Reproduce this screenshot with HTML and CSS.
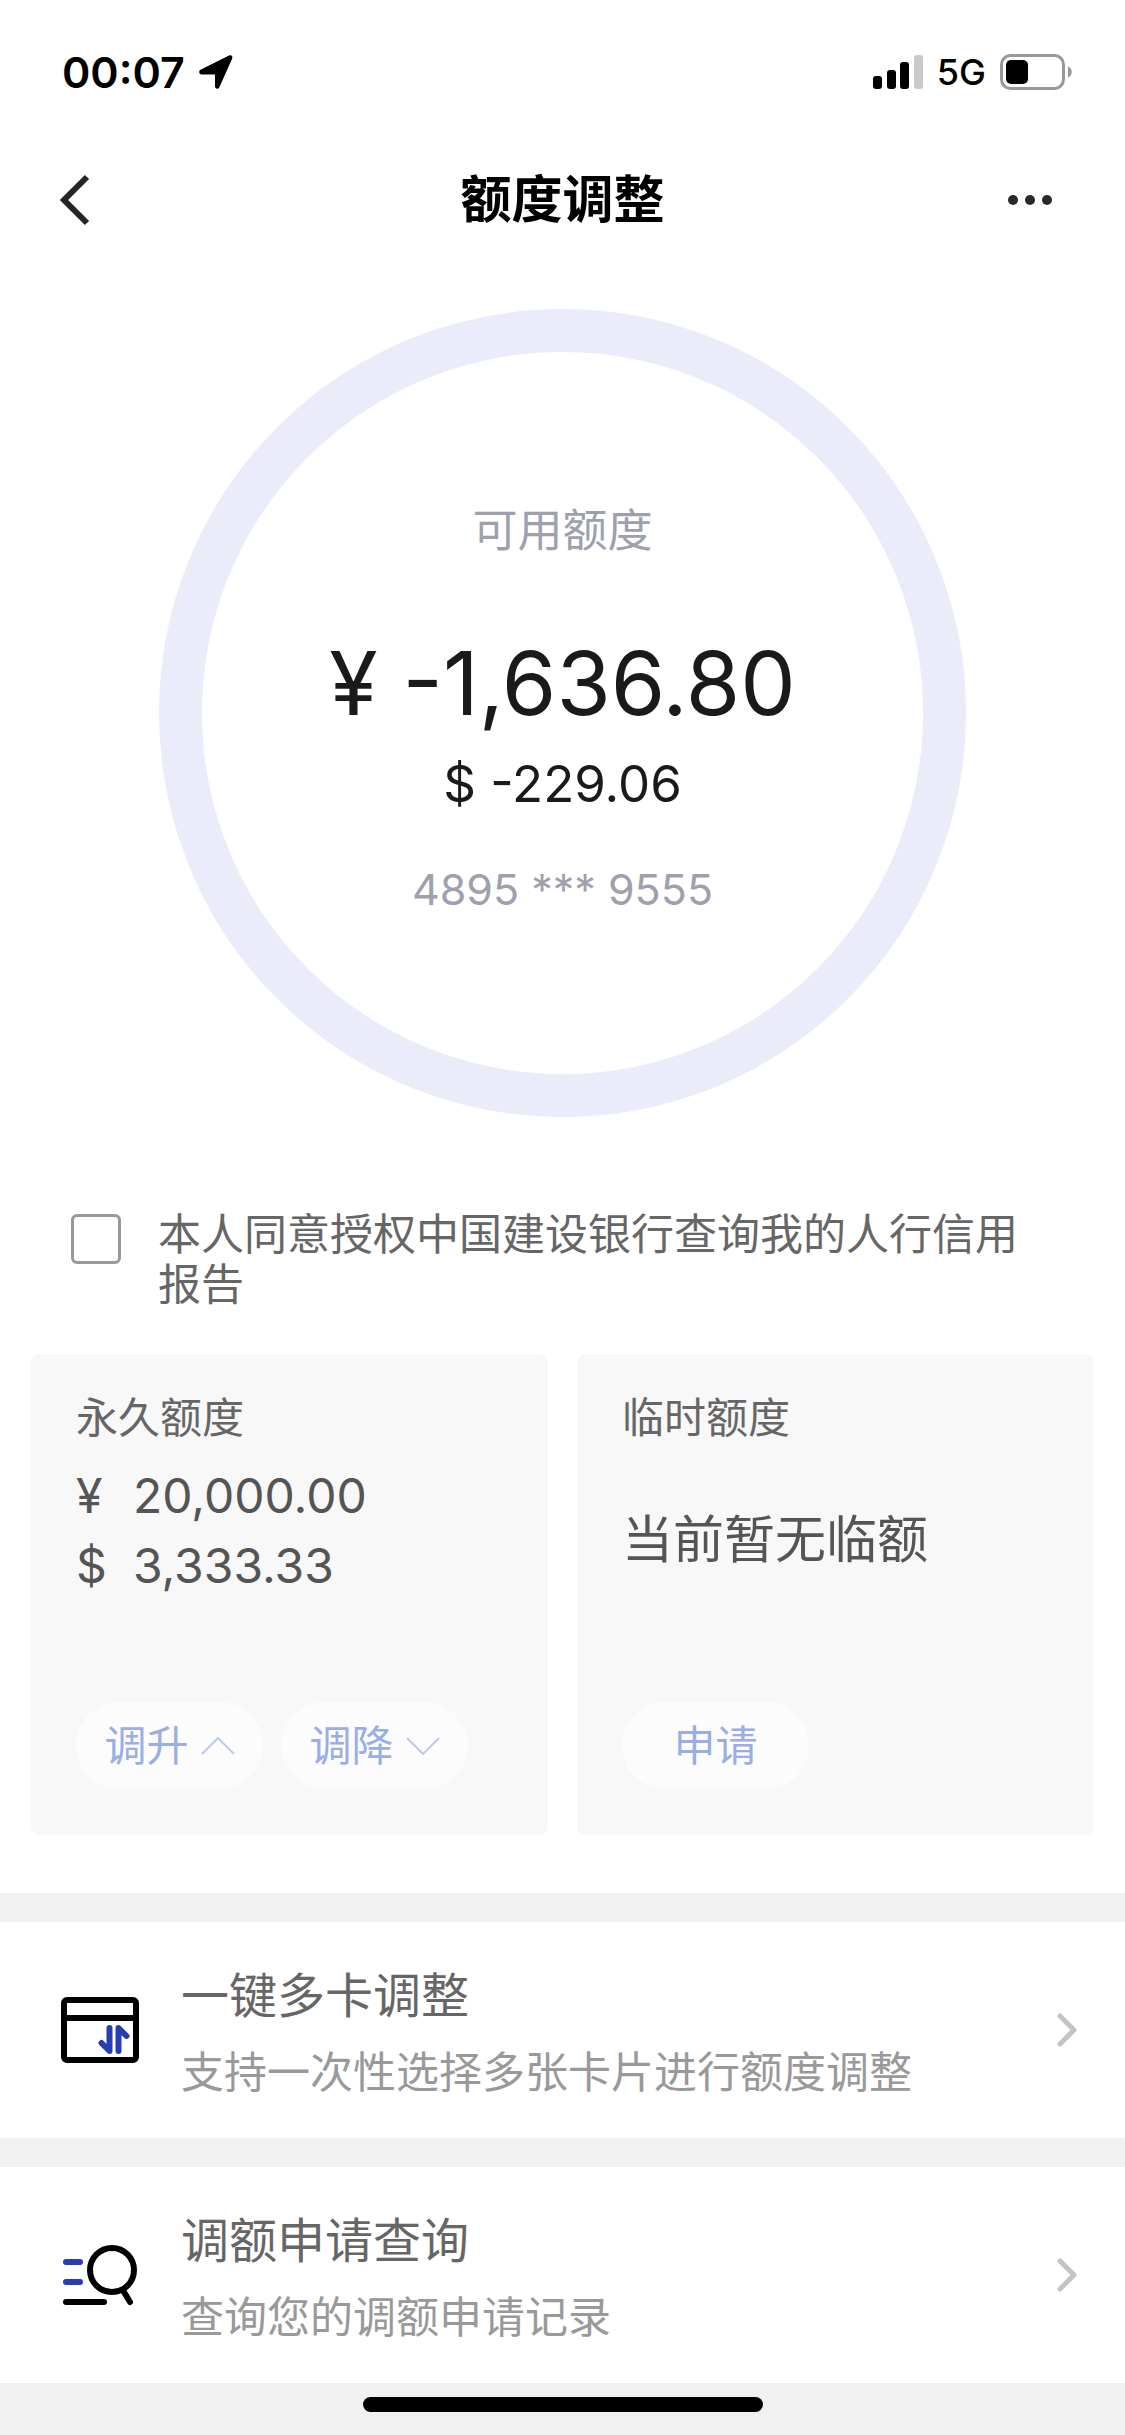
FILE: index.html
```html
<!DOCTYPE html>
<html lang="zh-CN">
<head>
<meta charset="utf-8">
<meta name="viewport" content="width=device-width, initial-scale=1">
<title>额度调整</title>
<link rel="stylesheet" href="styles.css">
</head>
<body>
<div class="screen">
  <div class="status-bar">
    <div class="status-left">
      <span class="clock">00:07</span>
      <svg class="location" width="34" height="34" viewBox="0 0 34 34" aria-hidden="true"><path d="M2 14.500 30 .6c2-1 4 .6 3.200 3L20.500 32c-1 2.700-4.500 2.200-4.500-.7V19.500H3C-.2 19.500-.8 15.800 2 14.500z"/></svg>
    </div>
    <div class="status-right">
      <svg width="50" height="34" viewBox="0 0 50 34" aria-hidden="true"><rect y="21" width="9" height="13" rx="3"/><rect x="14" y="15" width="9" height="19" rx="3"/><rect x="27" y="7" width="9" height="27" rx="3"/><rect x="41" width="9" height="34" rx="3" fill="#c9c9c9"/></svg>
      <span class="network">5G</span>
      <svg width="72" height="36" viewBox="0 0 72 36" aria-hidden="true"><rect x="1.500" y="1.500" width="62" height="33" rx="9" fill="none" stroke="#999" stroke-width="3"/><rect x="6" y="6" width="22" height="24" rx="5"/><path d="M68 12.500c5 1.500 5 9.500 0 11z" fill="#999"/></svg>
    </div>
  </div>

  <header class="nav">
    <button class="nav-button" type="button" aria-label="返回">
      <svg width="30" height="52" viewBox="0 0 30 52" aria-hidden="true"><path d="M27 3 4 26l23 23" fill="none" stroke="#242528" stroke-width="6"/></svg>
    </button>
    <h1 class="nav-title">额度调整</h1>
    <button class="nav-button nav-more" type="button" aria-label="更多">
      <svg width="46" height="12" viewBox="0 0 46 12" aria-hidden="true" fill="#292929"><circle cx="6" cy="6" r="5"/><circle cx="23" cy="6" r="5"/><circle cx="40" cy="6" r="5"/></svg>
    </button>
  </header>

  <main>
    <section class="overview">
      <div class="ring">
        <h2 class="ring-label">可用额度</h2>
        <p class="ring-amount">¥ -1,636.80</p>
        <p class="ring-usd">$ -229.06</p>
        <p class="ring-card">4895 *** 9555</p>
      </div>

      <div class="consent">
        <input class="consent-box" type="checkbox" id="consent">
        <label for="consent">本人同意授权中国建设银行查询我的人行信用报告</label>
      </div>

      <div class="limits">
        <section class="limit">
          <h2 class="limit-title">永久额度</h2>
          <p class="limit-row"><span>¥</span><span>20,000.00</span></p>
          <p class="limit-row"><span>$</span><span>3,333.33</span></p>
          <div class="limit-actions">
            <button class="pill" type="button">调升<svg width="34" height="18" viewBox="0 0 34 18" aria-hidden="true"><path d="M1 17 17 1l16 16"/></svg></button>
            <button class="pill" type="button">调降<svg width="34" height="18" viewBox="0 0 34 18" aria-hidden="true"><path d="M1 1 17 17 33 1"/></svg></button>
          </div>
        </section>
        <section class="limit">
          <h2 class="limit-title">临时额度</h2>
          <p class="limit-empty">当前暂无临额</p>
          <div class="limit-actions">
            <button class="pill" type="button">申请</button>
          </div>
        </section>
      </div>
    </section>

    <nav class="links">
      <a class="link" href="#multi-card">
        <svg class="link-icon" width="78" height="66" viewBox="0 0 78 66" fill="none" stroke="#000" stroke-width="6" stroke-linecap="round" stroke-linejoin="round" aria-hidden="true"><rect x="3" y="3" width="72" height="60" rx="3"/><path d="M3 21h72"/><path d="M48.500 31v23l-8-8M57.500 54V31l8 8" stroke="#283cb4"/></svg>
        <span class="link-text"><span class="link-title">一键多卡调整</span><span class="link-note">支持一次性选择多张卡片进行额度调整</span></span>
        <svg class="link-arrow" width="22" height="36" viewBox="0 0 22 36" aria-hidden="true"><path d="m4 4 14 14L4 32"/></svg>
      </a>
      <a class="link" href="#records">
        <svg class="link-icon" width="78" height="66" viewBox="0 0 78 66" fill="none" stroke="#000" stroke-width="6" stroke-linecap="round" aria-hidden="true"><circle cx="51" cy="28" r="22"/><path d="m63 50 6 10M5 60h38"/><path d="M5 20h14M5 40h14" stroke="#283cb4"/></svg>
        <span class="link-text"><span class="link-title">调额申请查询</span><span class="link-note">查询您的调额申请记录</span></span>
        <svg class="link-arrow" width="22" height="36" viewBox="0 0 22 36" aria-hidden="true"><path d="m4 4 14 14L4 32"/></svg>
      </a>
    </nav>
  </main>
  <div class="home-area"><div class="home-bar"></div></div>
</div>
</body>
</html>
```

FILE: styles.css
```css
* {
  box-sizing: border-box;
}

body {
  margin: 0;
  background: #f1f1f1;
  color: #666;
  font-family: Inter, "Noto Sans CJK SC", sans-serif;
  font-size: 43px;
  line-height: 50px;
}

h1, h2, p {
  margin: 0;
  font-weight: 400;
}

button {
  border: 0;
  padding: 0;
  background: none;
  color: inherit;
  font: inherit;
}

svg {
  flex: none;
  display: block;
}

.screen {
  min-height: 100vh;
  display: flex;
  flex-direction: column;
}

.status-bar {
  display: flex;
  justify-content: space-between;
  align-items: center;
  padding: 42px 53px 30px 62px;
  height: 132px;
  background: #fff;
  color: #000;
}

.status-left,
.status-right {
  display: flex;
  align-items: center;
  gap: 14px;
}

.clock {
  font-size: 43px;
  font-weight: 600;
}

.network {
  font-size: 36px;
  font-weight: 500;
}

.nav {
  display: grid;
  grid-template-columns: 1fr auto 1fr;
  align-items: center;
  height: 134px;
  padding: 2px 60px 0;
  background: #fff;
}

.nav-button {
  justify-self: start;
}

.nav-more {
  justify-self: end;
  padding-right: 12px;
}

.nav-title {
  color: #000;
  font-size: 51px;
  font-weight: 600;
  line-height: 70px;
}

.overview {
  padding: 43px 31px 58px;
  background: #fff;
}

.ring {
  display: flex;
  flex-direction: column;
  align-items: center;
  justify-content: center;
  width: 76%;
  aspect-ratio: 1;
  margin: 0 auto;
  padding-bottom: 6px;
  border: 43px solid #ebecf9;
  border-radius: 50%;
}

.ring-label,
.ring-card {
  color: #9ea0ae;
  line-height: 60px;
}

.ring-label {
  font-size: 45px;
}

.ring-amount {
  margin-top: 72px;
  color: #1a1a1a;
  font-size: 88px;
  line-height: 100px;
}

.ring-usd {
  margin-top: 16px;
  color: #1a1a1a;
  font-size: 51px;
  line-height: 70px;
}

.ring-card {
  margin-top: 40px;
}

.consent {
  display: flex;
  align-items: flex-start;
  gap: 37px;
  margin-top: 92px;
  padding: 0 40px;
}

.consent-box {
  flex: none;
  appearance: none;
  width: 50px;
  height: 50px;
  margin: 5px 0 0;
  border: 3px solid #999;
  border-radius: 6px;
  background: #fff;
}

.consent-box:checked {
  background: #283cb4;
}

.limits {
  display: grid;
  grid-template-columns: 1fr 1fr;
  gap: 29px;
  margin-top: 45px;
}

.limit {
  display: flex;
  flex-direction: column;
  padding: 39px 45px 46px;
  border-radius: 8px;
  background: #f8f8f8;
}

.limit-title {
  margin-bottom: 18px;
  font-size: 42px;
}

.limit-row {
  display: grid;
  grid-template-columns: 57px 1fr;
  color: #555;
  font-size: 48px;
  line-height: 70px;
}

.limit-empty {
  margin: 44px 0;
  color: #555;
  font-size: 51px;
  line-height: 70px;
}

.limit-actions {
  display: flex;
  gap: 18px;
  margin-top: auto;
}

.limit-row + .limit-actions {
  padding-top: 101px;
}

.pill {
  display: flex;
  align-items: center;
  justify-content: center;
  gap: 12px;
  width: 187px;
  height: 87px;
  padding-top: 2px;
  border-radius: 44px;
  background: #fcfcfc;
  color: #9aaee4;
  font-size: 42px;
}

.pill path {
  fill: none;
  stroke: #bccaf0;
  stroke-width: 2;
}

.links {
  display: grid;
  gap: 29px;
  margin-top: 29px;
}

.link {
  display: flex;
  align-items: center;
  gap: 42px;
  min-height: 216px;
  padding: 0 47px 0 61px;
  background: #fff;
  color: inherit;
  text-decoration: none;
}

.link-text {
  display: grid;
  gap: 16px;
  flex: 1;
  padding-top: 8px;
}

.link-title {
  font-size: 48px;
  line-height: 60px;
}

.link-note {
  color: #999;
  line-height: 60px;
}

.link-arrow path {
  fill: none;
  stroke: #c4c4c6;
  stroke-width: 5;
  stroke-linecap: round;
  stroke-linejoin: round;
}

.home-area {
  display: flex;
  justify-content: center;
  padding: 14px 0 22px;
}

.home-bar {
  width: 400px;
  height: 15px;
  border-radius: 8px;
  background: #000;
}
```
